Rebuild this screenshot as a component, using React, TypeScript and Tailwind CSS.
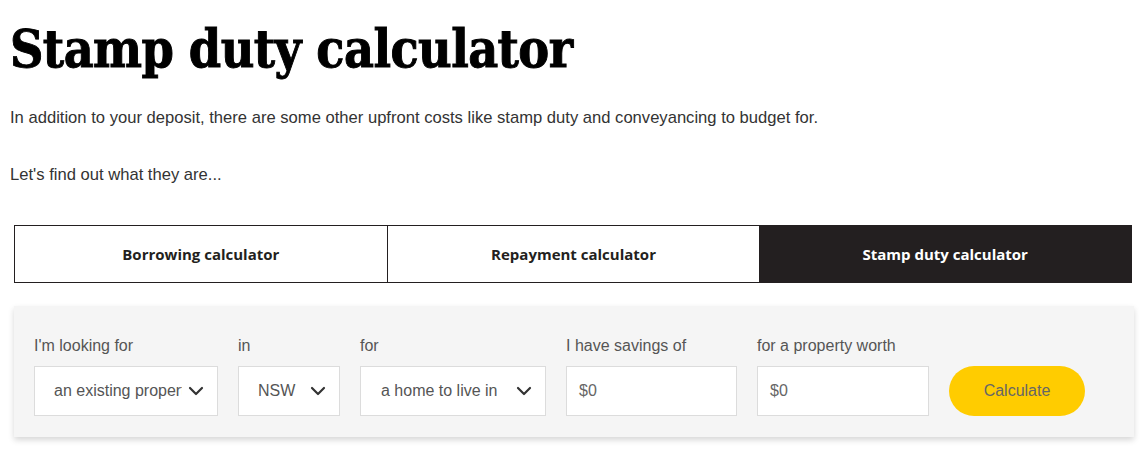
import { FC } from 'react';

const Chevron: FC = () => (
   <svg width="16" height="10" viewBox="0 0 16 10" fill="none" className="shrink-0">
      <path d="M2 2l6 6 6-6" stroke="#333" strokeWidth="2.2" strokeLinecap="round" strokeLinejoin="round" />
   </svg>
);

const Select: FC<{ label: string; value: string; width: string; pad: string }> = ({ label, value, width, pad }) => (
   <div className={`flex flex-col ${width}`}>
      <span className="text-[16px] text-[#555] mb-[9px] leading-[22px]">{label}</span>
      <div className={`h-[50px] bg-white border border-[#dcdcdc] flex items-center ${pad} pr-[13px]`}>
         <span className="flex-1 text-[16px] text-[#555] whitespace-nowrap overflow-hidden mr-[6px]">{value}</span>
         <Chevron />
      </div>
   </div>
);

const Field: FC<{ label: string; width: string }> = ({ label, width }) => (
   <div className={`flex flex-col ${width}`}>
      <span className="text-[16px] text-[#555] mb-[9px] leading-[22px]">{label}</span>
      <div className="h-[50px] bg-white border border-[#dcdcdc] flex items-center px-[12px]">
         <span className="text-[16px] text-[#666]">$0</span>
      </div>
   </div>
);

const App: FC = () => {
   return (
      <div className="bg-white w-[1146px] h-[463px] overflow-hidden">
         <div className="px-[10px]">
            <h1
               className="pt-[19px] text-[51.5px] leading-[60px] font-bold text-black tracking-[-0.6px] [-webkit-text-stroke:0.9px_black]"
               style={{ fontFamily: '"DejaVu Serif Condensed", "DejaVu Serif", serif' }}
            >
               Stamp duty calculator
            </h1>
            <div className="text-[16.6px] text-[#333] font-['Liberation_Sans',sans-serif]">
               <p className="mt-[27px] leading-[24px]">
                  In addition to your deposit, there are some other upfront costs like stamp duty and conveyancing to budget for.
               </p>
               <p className="mt-[33px] leading-[24px]">Let's find out what they are...</p>
            </div>
         </div>
         <div className="ml-[14px] w-[1118px] mt-[38px] flex border border-[#231f20] h-[58px] font-['Open_Sans',sans-serif]">
            <button className="flex-1 text-[15px] font-bold text-[#231f20] border-r border-[#231f20]">Borrowing calculator</button>
            <button className="flex-1 text-[15px] font-bold text-[#231f20]">Repayment calculator</button>
            <button className="flex-1 text-[15px] font-bold text-white bg-[#231f20]">Stamp duty calculator</button>
         </div>
         <div className="ml-[14px] w-[1120px] mt-[23px] bg-[#f5f5f5] shadow-[0_3px_6px_rgba(0,0,0,0.16)] px-[20px] pt-[29px] pb-[21px] font-['Liberation_Sans',sans-serif]">
            <div className="flex items-end gap-[20px]">
               <Select label="I'm looking for" value="an existing property" width="w-[184px]" pad="pl-[19px]" />
               <Select label="in" value="NSW" width="w-[102px]" pad="pl-[19px]" />
               <Select label="for" value="a home to live in" width="w-[186px]" pad="pl-[20px]" />
               <Field label="I have savings of" width="w-[171px]" />
               <Field label="for a property worth" width="w-[172px]" />
               <button className="w-[136px] h-[50px] rounded-full bg-[#ffcc00] text-[16px] text-[#666]">Calculate</button>
            </div>
         </div>
      </div>
   );
};

export default App;
